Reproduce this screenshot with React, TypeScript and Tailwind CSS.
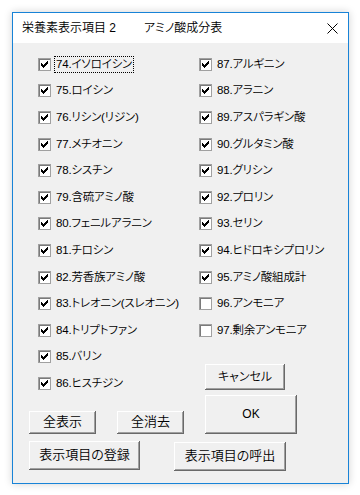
import React from "react";

const FONT = "[font-family:'Liberation_Sans','Noto_Sans_CJK_JP',sans-serif]";

type Item = { label: string; checked: boolean; focus?: boolean };

const leftItems: Item[] = [
  { label: "74.イソロイシン", checked: true, focus: true },
  { label: "75.ロイシン", checked: true },
  { label: "76.リシン(リジン)", checked: true },
  { label: "77.メチオニン", checked: true },
  { label: "78.シスチン", checked: true },
  { label: "79.含硫アミノ酸", checked: true },
  { label: "80.フェニルアラニン", checked: true },
  { label: "81.チロシン", checked: true },
  { label: "82.芳香族アミノ酸", checked: true },
  { label: "83.トレオニン(スレオニン)", checked: true },
  { label: "84.トリプトファン", checked: true },
  { label: "85.バリン", checked: true },
  { label: "86.ヒスチジン", checked: true },
];

const rightItems: Item[] = [
  { label: "87.アルギニン", checked: true },
  { label: "88.アラニン", checked: true },
  { label: "89.アスパラギン酸", checked: true },
  { label: "90.グルタミン酸", checked: true },
  { label: "91.グリシン", checked: true },
  { label: "92.プロリン", checked: true },
  { label: "93.セリン", checked: true },
  { label: "94.ヒドロキシプロリン", checked: true },
  { label: "95.アミノ酸組成計", checked: true },
  { label: "96.アンモニア", checked: false },
  { label: "97.剰余アンモニア", checked: false },
];

function CheckBox({ checked }: { checked: boolean }) {
  return (
    <span className="block w-[13px] h-[13px] shrink-0 bg-white shadow-[inset_1px_1px_0_#a0a0a0,inset_-1px_-1px_0_#a0a0a0,inset_2px_2px_0_#7a7a7a]">
      {checked && (
        <svg width="13" height="13" viewBox="0 0 13 13" shapeRendering="crispEdges">
          <path
            fill="#000"
            d="M3 5h1v3h-1z M4 6h1v3h-1z M5 7h1v3h-1z M6 6h1v3h-1z M7 5h1v3h-1z M8 4h1v3h-1z M9 3h1v3h-1z"
          />
        </svg>
      )}
    </span>
  );
}

function Row({ item }: { item: Item }) {
  return (
    <div className="h-[26.6px] flex items-center gap-[3px]">
      <CheckBox checked={item.checked} />
      <span
        className={
          "px-[1px] leading-[15px] text-[11.5px] tracking-[-0.2px] font-[350] text-black whitespace-nowrap [font-feature-settings:'palt'] border " +
          (item.focus ? "border-dotted border-black" : "border-transparent")
        }
      >
        {item.label}
      </span>
    </div>
  );
}

function Btn({ w, h, size, children }: { w: string; h: string; size: string; children: React.ReactNode }) {
  return (
    <div
      className={
        "flex items-center justify-center bg-[#f0f0f0] text-black font-[350] whitespace-nowrap [font-feature-settings:'palt'] shadow-[inset_-1px_-1px_0_#696969,inset_1px_1px_0_#ffffff,inset_-2px_-2px_0_#a0a0a0] " +
        w +
        " " +
        h +
        " " +
        size
      }
    >
      {children}
    </div>
  );
}

export default function App() {
  return (
    <div className={"w-[360px] h-[495px] bg-white pt-[12px] pl-[12px] " + FONT}>
      <div className="w-[337px] h-[472px] border border-[#1883d7] bg-[#f0f0f0] flex flex-col shadow-[0_0_8px_rgba(0,0,0,0.18)]">
        <div className="h-[30px] bg-white flex items-center pl-[9px] pr-[10px] shrink-0">
          <span className="w-[122px] shrink-0 text-[12px] font-[350] text-black whitespace-nowrap">栄養素表示項目 2</span>
          <span className="text-[12px] font-[350] text-black whitespace-nowrap [font-feature-settings:'palt']">アミノ酸成分表</span>
          <svg className="ml-auto" width="11" height="11" viewBox="0 0 11 11">
            <path d="M0.5 0.5L10.5 10.5M10.5 0.5L0.5 10.5" stroke="#000" strokeWidth="1" />
          </svg>
        </div>
        <div className="flex-1 pt-[8px] pl-[16px] flex flex-col">
          <div className="flex items-start">
            <div className="w-[170px] flex flex-col">
              <div className="pl-[9px] flex flex-col">
                {leftItems.map((it) => (
                  <Row key={it.label} item={it} />
                ))}
              </div>
              <div className="mt-[14px] flex gap-[21px]">
                <Btn w="w-[67px]" h="h-[23px]" size="text-[13px]">全表示</Btn>
                <Btn w="w-[67px]" h="h-[23px]" size="text-[13px]">全消去</Btn>
              </div>
            </div>
            <div className="flex flex-col">
              {rightItems.map((it) => (
                <Row key={it.label} item={it} />
              ))}
              <div className="ml-[6px] mt-[20px]">
                <Btn w="w-[80px]" h="h-[26px]" size="text-[12px]">キャンセル</Btn>
              </div>
              <div className="ml-[6px] mt-[5px]">
                <Btn w="w-[92px]" h="h-[39px]" size="text-[12px]">OK</Btn>
              </div>
            </div>
          </div>
          <div className="mt-[7px] flex items-start gap-[34px]">
            <Btn w="w-[111px]" h="h-[29px]" size="text-[13px]">表示項目の登録</Btn>
            <div className="mt-[1px]">
              <Btn w="w-[112px]" h="h-[29px]" size="text-[13px]">表示項目の呼出</Btn>
            </div>
          </div>
        </div>
      </div>
    </div>
  );
}
